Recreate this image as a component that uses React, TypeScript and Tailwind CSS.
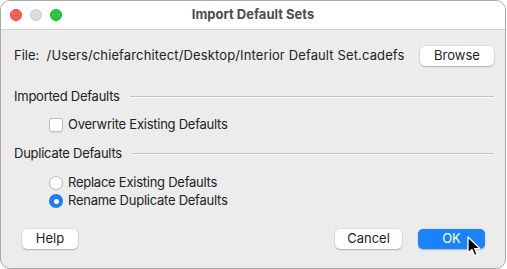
import React from "react"

const font = { fontFamily: "Inter, 'Noto Sans', sans-serif" }

function TrafficLights() {
  return (
    <div className="absolute left-[9px] top-[8px] flex gap-[8px]">
      <span className="block h-[12px] w-[12px] rounded-full bg-[#fe5f57] border border-[#e14640]" />
      <span className="block h-[12px] w-[12px] rounded-full bg-[#dcdcdc] border border-[#c8c8c8]" />
      <span className="block h-[12px] w-[12px] rounded-full bg-[#28c840] border border-[#1aab29]" />
    </div>
  )
}

function GroupHeader({ title }: { title: string }) {
  return (
    <div className="flex h-[16px] items-center gap-[10px] pl-[13px] pr-[11px]">
      <span className="whitespace-nowrap tracking-[-0.25px]">{title}</span>
      <div className="flex-1">
        <div className="h-px bg-[#c3c3c3]" />
        <div className="h-px bg-[#fafafa]" />
      </div>
    </div>
  )
}

function PushButton({ label, width, primary }: { label: string; width: string; primary?: boolean }) {
  return (
    <button
      className={
        primary
          ? `${width} h-[20px] rounded-[5px] bg-[#1a82fb] text-white shadow-[0_0.5px_1.5px_rgba(0,0,0,0.25)]`
          : `${width} h-[20px] rounded-[5px] bg-white text-[#1e1e1e] shadow-[0_0_0_0.5px_rgba(0,0,0,0.12),0_1px_1.5px_rgba(0,0,0,0.2)]`
      }
    >
      {label}
    </button>
  )
}

function Cursor() {
  return (
    <svg className="absolute left-[466px] top-[236px]" width="18" height="22" viewBox="0 0 18 22">
      <path
        d="M2 1 L2 17 L6 13.5 L8.6 19.5 L11.2 18.4 L8.7 12.6 L14 12.6 Z"
        fill="#000"
        stroke="#fff"
        strokeWidth="1.3"
        strokeLinejoin="round"
      />
    </svg>
  )
}

export default function App() {
  return (
    <div className="relative h-[269px] w-[507px] bg-white text-[13px] text-[#222]" style={font}>
      <div className="h-[269px] w-[506px] overflow-hidden rounded-[10px] border border-[#a8a8a8] bg-[#ececec]">
        {/* Title bar */}
        <div className="relative flex h-[29px] items-center justify-center border-b border-[#d4d4d4] bg-white">
          <TrafficLights />
          <span className="font-bold text-[#4d4d4d]">Import Default Sets</span>
        </div>

        {/* File row */}
        <div className="mt-[15px] flex h-[21px] items-center justify-between pl-[13px] pr-[11px]">
          <div className="whitespace-nowrap">
            File:&nbsp;&nbsp;<span className="tracking-[0.13px]">/Users/chiefarchitect/Desktop/Interior Default Set.cadefs</span>
          </div>
          <PushButton label="Browse" width="w-[74px]" />
        </div>

        {/* Imported Defaults */}
        <div className="mt-[23px]">
          <GroupHeader title="Imported Defaults" />
        </div>
        <div className="mt-[12px] flex h-[16px] items-center gap-[5px] pl-[48px] tracking-[-0.25px]">
          <span className="block h-[14px] w-[14px] rounded-[3px] border border-[#c0c0c0] bg-white shadow-[0_0.5px_1px_rgba(0,0,0,0.1)]" />
          <span>Overwrite Existing Defaults</span>
        </div>

        {/* Duplicate Defaults */}
        <div className="mt-[13px]">
          <GroupHeader title="Duplicate Defaults" />
        </div>
        <div className="mt-[13px] flex h-[16px] items-center gap-[5px] pl-[48px] tracking-[-0.25px]">
          <span className="block h-[14px] w-[14px] rounded-full border border-[#c0c0c0] bg-white shadow-[0_0.5px_1px_rgba(0,0,0,0.1)]" />
          <span>Replace Existing Defaults</span>
        </div>
        <div className="mt-[2px] flex h-[16px] items-center gap-[5px] pl-[48px] tracking-[-0.25px]">
          <span className="flex h-[14px] w-[14px] items-center justify-center rounded-full bg-[#1a7ff6]">
            <span className="block h-[5px] w-[5px] rounded-full bg-white" />
          </span>
          <span>Rename Duplicate Defaults</span>
        </div>

        {/* Buttons */}
        <div className="mt-[20px] flex items-center pl-[21px] pr-[20px]">
          <PushButton label="Help" width="w-[56px]" />
          <div className="flex-1" />
          <PushButton label="Cancel" width="w-[67px]" />
          <div className="w-[16px]" />
          <PushButton label="OK" width="w-[67px]" primary />
        </div>
      </div>
      <Cursor />
    </div>
  )
}
